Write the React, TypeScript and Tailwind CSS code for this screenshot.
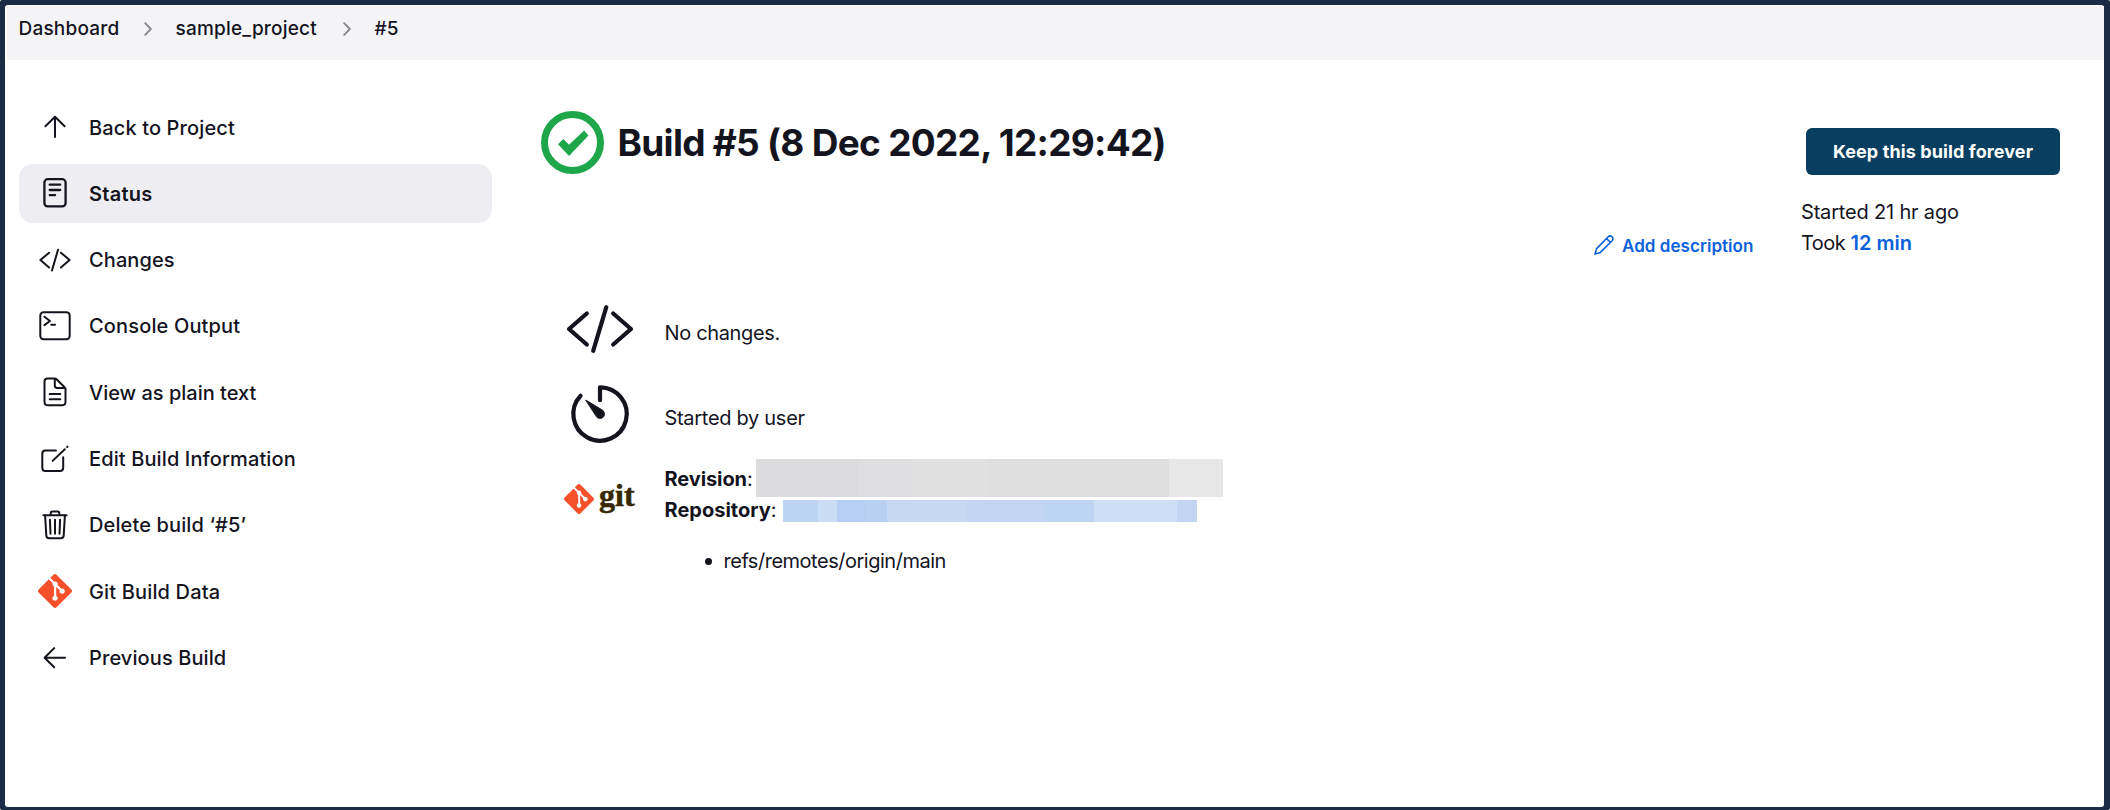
import type { ReactNode } from "react";
import { SiGit } from "react-icons/si";

const stroke = {
  fill: "none",
  stroke: "currentColor",
  strokeLinecap: "round" as const,
  strokeLinejoin: "round" as const,
};

function SideIcon({ width = 2, children }: { width?: number; children: ReactNode }) {
  return (
    <svg viewBox="-18 -18 36 36" className="size-9 shrink-0" {...stroke} strokeWidth={width}>
      {children}
    </svg>
  );
}

function Chevron() {
  return (
    <svg viewBox="0 0 8 14" className="h-3.5 w-2 shrink-0 text-[#87878f]" {...stroke} strokeWidth={1.9}>
      <path d="M1.2 1.2 L6.8 7 L1.2 12.8" />
    </svg>
  );
}

type Item = { label: string; icon: ReactNode; active?: boolean; tracking: string };

const items: Item[] = [
  {
    label: "Back to Project",
    tracking: "tracking-[0.13px]",
    icon: (
      <SideIcon>
        <path d="M0 10 V-10.2 M-9.6 -0.8 L0 -10.2 L9.6 -0.8" />
      </SideIcon>
    ),
  },
  {
    label: "Status",
    active: true,
    tracking: "tracking-[0.25px]",
    icon: (
      <SideIcon width={2.3}>
        <rect x="-10.6" y="-13.8" width="21.2" height="27.2" rx="3.4" />
        <path d="M-5.3 -8.3 H5.2 M-5.3 -3 H5.2 M-5.3 2.1 H0.1" />
      </SideIcon>
    ),
  },
  {
    label: "Changes",
    tracking: "tracking-[0.1px]",
    icon: (
      <SideIcon>
        <path d="M-5.9 -7.3 L-14.6 0.1 L-5.9 7.5 M5.9 -7.3 L14.6 0.1 L5.9 7.5 M3 -10.2 L-3 10.5" />
      </SideIcon>
    ),
  },
  {
    label: "Console Output",
    tracking: "tracking-[0.15px]",
    icon: (
      <SideIcon>
        <rect x="-14.7" y="-13.8" width="29.4" height="27" rx="3.2" />
        <path d="M-10.6 -9.2 L-5 -5 L-10.6 -0.9 M-3.8 -1.2 H0" />
      </SideIcon>
    ),
  },
  {
    label: "View as plain text",
    tracking: "tracking-[-0.01px]",
    icon: (
      <SideIcon>
        <path d="M-7.4 -13.6 H-0.4 Q0.7 -13.6 1.5 -12.8 L9.6 -4.8 Q10.5 -4 10.5 -2.8 V9.7 Q10.5 13.3 6.9 13.3 H-6.9 Q-10.5 13.3 -10.5 9.7 V-10.5 Q-10.5 -13.6 -7.4 -13.6 Z" />
        <path d="M-0.2 -13 V-6.4 Q-0.2 -4 2.3 -4 H10 M-5.3 2.1 H5.3 M-5.3 7.2 H5.3" />
      </SideIcon>
    ),
  },
  {
    label: "Edit Build Information",
    tracking: "tracking-[0.12px]",
    icon: (
      <SideIcon>
        <path d="M1 -8.5 H-9.6 Q-12.7 -8.5 -12.7 -5.4 V8.8 Q-12.7 12 -9.6 12 H5 Q8.2 12 8.2 8.8 V-1.8 M-2.4 1.9 L9.8 -9.7 M12.1 -12 L12.5 -12.4" />
      </SideIcon>
    ),
  },
  {
    label: "Delete build ‘#5’",
    tracking: "tracking-[0.12px]",
    icon: (
      <SideIcon>
        <path d="M-11.6 -9.7 H11.6 M-4.3 -9.9 V-11.8 Q-4.3 -13.4 -2.7 -13.4 H2.7 Q4.3 -13.4 4.3 -11.8 V-9.9" />
        <path d="M-9.9 -9.5 L-8.7 10.4 Q-8.5 13.2 -5.8 13.2 H5.8 Q8.5 13.2 8.7 10.4 L9.9 -9.5 M-5.1 -5.2 L-4.5 8.8 M0 -5.2 V8.8 M5.1 -5.2 L4.5 8.8" />
      </SideIcon>
    ),
  },
  {
    label: "Git Build Data",
    tracking: "tracking-[0.15px]",
    icon: (
      <span className="flex size-9 shrink-0 items-center justify-center text-[#f7512b]">
        <SiGit size={34} />
      </span>
    ),
  },
  {
    label: "Previous Build",
    tracking: "tracking-[0.1px]",
    icon: (
      <SideIcon>
        <path d="M10 -0.3 H-10.4 M-0.8 -9.9 L-10.4 -0.3 L-0.8 9.3" />
      </SideIcon>
    ),
  },
];

function Redaction({ blocks, className }: { blocks: [number, string][]; className: string }) {
  return (
    <span className={"flex " + className}>
      {blocks.map(([w, color], i) => (
        <span key={i} className="h-full" style={{ width: w, backgroundColor: color }} />
      ))}
    </span>
  );
}

const revisionBlocks: [number, string][] = [
  [102, "#dcdcde"],
  [54, "#dfdfe1"],
  [76, "#e1e1e1"],
  [181, "#dfdfdf"],
  [54, "#e7e7e7"],
];

const repositoryBlocks: [number, string][] = [
  [35.5, "#bcd3f2"],
  [19, "#cbdcf5"],
  [29, "#b5cef1"],
  [21, "#b8d0f1"],
  [80, "#c5d8f4"],
  [78, "#c2d6f3"],
  [49, "#bed4f3"],
  [83, "#cedef5"],
  [20, "#c2d5f3"],
];

export default function App() {
  return (
    <div className="flex h-[810px] w-full rounded-[2px] bg-[#1c2b45] pt-[5px] pr-1.5 pb-[3px] pl-[5px] font-[Inter,sans-serif] text-xl text-[#14141f]">
      <div className="flex flex-1 flex-col rounded-[3px] bg-white pt-px pl-0.5">
        <header className="flex h-[54px] shrink-0 items-start bg-[#f4f4f7] pt-[11px] pl-[11.5px] text-[19px] leading-6 font-medium tracking-[0.2px]">
          <nav className="flex items-center">
            <span className="w-[125px]">Dashboard</span>
            <Chevron />
            <span className="ml-6 w-[167px]">sample_project</span>
            <Chevron />
            <span className="ml-6">#5</span>
          </nav>
        </header>

        <div className="flex flex-1">
          <aside className="flex w-[485px] shrink-0 flex-col gap-[7.3px] pt-[37.7px] pl-3">
            {items.map((item) => (
              <a
                key={item.label}
                className={
                  "flex h-[59px] items-center gap-4 rounded-[14px] pl-[18px] leading-6 whitespace-nowrap " +
                  item.tracking +
                  (item.active ? " bg-[#eeedf2] font-semibold" : " font-medium")
                }
              >
                {item.icon}
                <span className="pt-[0.8px]">{item.label}</span>
              </a>
            ))}
          </aside>

          <main className="flex flex-1 flex-col pl-[49px]">
            <section className="flex h-[230px] items-start">
              <h1 className="flex flex-1 items-center gap-[13.5px] pt-[51px] text-[37px] leading-[63px] font-bold tracking-[-0.72px] whitespace-nowrap">
                <svg viewBox="-31.5 -31.5 63 63" className="size-[63px] shrink-0 text-[#1ea64b]">
                  <circle r="28" fill="none" stroke="currentColor" strokeWidth="7" />
                  <path d="M-14.5 1.8 L-9.2 -3.6 L-3.5 2.3 L11.6 -11.9 L16 -7 L-3.5 13.5 Z" fill="currentColor" />
                </svg>
                Build #5 (8 Dec 2022, 12:29:42)
              </h1>

              <a className="flex w-[207px] items-center gap-2 pt-[172px] text-[17px] leading-6 font-semibold tracking-[0.05px] whitespace-nowrap text-[#0b62db]">
                <svg viewBox="0 0 20 20" className="size-5 shrink-0" {...stroke} strokeWidth={1.6}>
                  <path d="M0.9 19.1 L2.6 13.6 L14.2 1.8 Q16.2 0.1 18 1.8 Q19.8 3.7 18.1 5.8 L6.4 17.4 Z M12.6 3.6 L16.3 7.3" />
                </svg>
                <span className="pt-0.5">Add description</span>
              </a>

              <div className="w-[303px] pt-[68px]">
                <button className="ml-[5px] block h-[47px] w-[254px] rounded-[6px] bg-[#083f60] text-lg leading-[47px] font-bold tracking-[0.1px] whitespace-nowrap text-white">
                  Keep this build forever
                </button>
                <p className="mt-[22px] leading-[31px] tracking-[-0.18px]">Started 21 hr ago</p>
                <p className="leading-[31px] tracking-[-0.5px]">
                  Took <a className="font-semibold tracking-normal text-[#0b62db]">12 min</a>
                </p>
              </div>
            </section>

            <section className="flex flex-col pl-[22.5px]">
              <div className="flex h-[85px] items-start">
                <svg viewBox="-36 -39 72 85" className="h-[85px] w-[72px] shrink-0" {...stroke} strokeWidth={4.2}>
                  <path d="M-13.2 -15.5 L-31 0 L-13.2 15.5 M13.2 -15.5 L31 0 L13.2 15.5 M6.3 -21.8 L-6.8 21.8" />
                </svg>
                <span className="ml-[29px] pt-7 leading-[30px] tracking-[-0.35px]">No changes.</span>
              </div>

              <div className="flex h-[84px] items-start">
                <svg viewBox="-36 -39 72 85" className="h-[85px] w-[72px] shrink-0" {...stroke} strokeWidth={4.2}>
                  <path d="M0 -13.8 V-26.7 A26.7 26.7 0 1 1 -19.4 -18.3" />
                  <path
                    d="M-14 -13.9 Q-14.6 -14.3 -14.1 -13.4 L-4.2 1.8 A4.6 4.6 0 1 0 2.4 -4 Z"
                    fill="currentColor"
                    strokeWidth="0.8"
                  />
                </svg>
                <span className="ml-[29px] pt-7 leading-[30px] tracking-[-0.3px]">Started by user</span>
              </div>

              <div className="flex items-start">
                <div className="flex h-[79px] w-[72px] shrink-0 items-center gap-[5px] pl-[0.5px]">
                  <SiGit size={30} className="shrink-0 text-[#f7512b]" />
                  <span className="pb-[7px] font-['Liberation_Serif',serif] text-[32px] leading-8 font-bold text-[#362701] [-webkit-text-stroke:0.5px_#362701]">
                    git
                  </span>
                </div>
                <div className="ml-[29px] flex flex-col">
                  <div className="flex h-[38px] items-start leading-[41px]">
                    <span className="w-[91.5px] whitespace-nowrap">
                      <b className="tracking-[-0.1px]">Revision</b>:
                    </span>
                    <Redaction blocks={revisionBlocks} className="h-[38px]" />
                  </div>
                  <div className="mt-[3px] flex h-[22px] items-start leading-[21px]">
                    <span className="w-[118px] whitespace-nowrap">
                      <b>Repository</b>:
                    </span>
                    <Redaction blocks={repositoryBlocks} className="h-[22px]" />
                  </div>
                  <ul className="mt-6 pl-[40.5px]">
                    <li className="flex items-center gap-[11.5px] leading-[30px] tracking-[-0.48px]">
                      <span className="size-[7px] rounded-full bg-[#14141f]" />
                      refs/remotes/origin/main
                    </li>
                  </ul>
                </div>
              </div>
            </section>
          </main>
        </div>
      </div>
    </div>
  );
}
